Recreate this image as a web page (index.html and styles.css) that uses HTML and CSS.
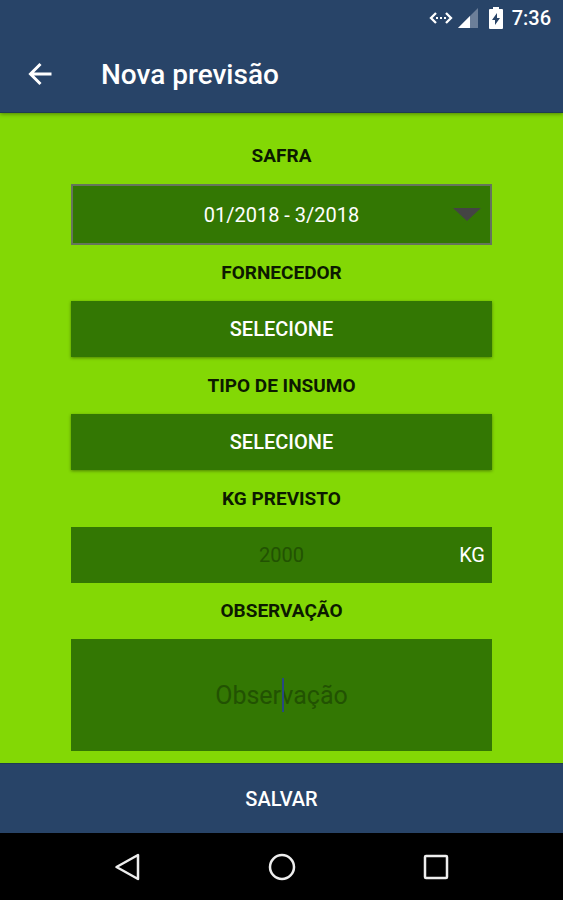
FILE: index.html
```html
<!DOCTYPE html>
<html lang="pt-BR">

<head>
    <meta charset="UTF-8" />
    <meta name="viewport" content="width=device-width, initial-scale=1.0" />
    <title>Nova previsão</title>
    <link rel="stylesheet" href="styles.css">
</head>

<body>
    <div class="app">
        <header class="top">
            <div class="status-bar">
                <svg class="icon-net" width="24" height="16" viewBox="0 0 24 16" aria-hidden="true">
                    <path d="M7 3 L2 8 L7 13 M17 3 L22 8 L17 13" fill="none" stroke="#fff" stroke-width="2.300" />
                    <path d="M7 7h2v2H7z M11 7h2v2h-2z M15 7h2v2h-2z" fill="#fff" />
                </svg>
                <svg class="icon-signal" width="20" height="20" viewBox="0 0 20 20" aria-hidden="true">
                    <path d="M20 0 V20 H0 Z" fill="#6c7f99" />
                    <path d="M12 8 V20 H0 Z" fill="#fff" />
                </svg>
                <svg class="icon-battery" width="14" height="22" viewBox="0 0 14 22" aria-hidden="true">
                    <path d="M4 0h6v2h3q1 0 1 1v18q0 1-1 1H1q-1 0-1-1V3q0-1 1-1h3z" fill="#fff" />
                    <path d="M8 6 L3 13 H6 V18 L11 11 H8 Z" fill="#284468" />
                </svg>
                <time class="clock">7:36</time>
            </div>
            <div class="toolbar">
                <button class="back" type="button" aria-label="Voltar">
                    <svg width="24" height="24" viewBox="0 0 24 24">
                        <path d="M23.500 12 H3 M12.500 2 L2.500 12 L12.500 22" fill="none" stroke="#fff" stroke-width="3" />
                    </svg>
                </button>
                <h1>Nova previsão</h1>
            </div>
        </header>

        <form class="form" id="form">
            <label for="safra">SAFRA</label>
            <div class="select">
                <select id="safra" name="safra">
                    <option>01/2018 - 3/2018</option>
                </select>
                <svg class="arrow" width="28" height="13" viewBox="0 0 28 13" aria-hidden="true">
                    <path d="M0 0 H28 L14 13 Z" fill="#444" />
                </svg>
            </div>

            <label for="fornecedor">FORNECEDOR</label>
            <button class="field" id="fornecedor" type="button">SELECIONE</button>

            <label for="insumo">TIPO DE INSUMO</label>
            <button class="field" id="insumo" type="button">SELECIONE</button>

            <label for="kg">KG PREVISTO</label>
            <div class="kg">
                <input type="text" id="kg" name="kg" inputmode="numeric" placeholder="2000" />
                <span class="unit">KG</span>
            </div>

            <label for="obs">OBSERVAÇÃO</label>
            <div class="obs">
                <textarea id="obs" name="obs" rows="1" placeholder="Observação"></textarea>
                <span class="caret"></span>
            </div>
        </form>

        <button class="save" type="submit" form="form">SALVAR</button>

        <nav class="nav-bar">
            <button type="button" aria-label="Voltar">
                <svg width="28" height="28" viewBox="0 0 28 28">
                    <path d="M24 2 V26 L2.500 14 Z" />
                </svg>
            </button>
            <button type="button" aria-label="Início">
                <svg width="28" height="28" viewBox="0 0 28 28">
                    <circle cx="14" cy="14" r="12" />
                </svg>
            </button>
            <button type="button" aria-label="Recentes">
                <svg width="28" height="28" viewBox="0 0 28 28">
                    <rect x="3" y="3" width="22" height="22" rx="1" />
                </svg>
            </button>
        </nav>
    </div>
</body>

</html>
```
FILE: styles.css
```css
* {
    box-sizing: border-box;
}

body {
    margin: 0;
    font-family: Roboto, "Liberation Sans", sans-serif;
    font-size: 20px;
}

button,
input,
select,
textarea {
    margin: 0;
    border: 0;
    border-radius: 0;
    font-family: inherit;
    font-size: inherit;
}

button {
    padding: 0;
    font-weight: 500;
    color: white;
    cursor: pointer;
}

.app {
    min-height: 100vh;
    display: flex;
    flex-flow: column;
    background-color: #83d805;
}

.top {
    background-color: #284468;
    color: white;
    border-bottom: 1px solid #1f3d50;
    box-shadow: 0 1px 4px rgba(0, 0, 0, 0.4);
}

.status-bar {
    display: flex;
    align-items: center;
    justify-content: flex-end;
    height: 36px;
    padding-right: 12px;
}

.icon-signal {
    margin-left: 5px;
}

.icon-battery {
    margin: 0 9px 0 11px;
}

.clock {
    font-weight: 500;
}

.toolbar {
    display: flex;
    align-items: center;
    height: 76px;
    padding-left: 28px;
}

.back {
    display: flex;
    background: none;
}

.toolbar h1 {
    margin: 0 0 0 49px;
    font-size: 28px;
    font-weight: 500;
}

.form {
    flex: 1;
    display: flex;
    flex-flow: column;
    padding: 15px 71px 12px;
}

.form label {
    line-height: 56px;
    text-align: center;
    font-size: 19px;
    font-weight: 700;
    color: #0c1a00;
}

.select,
.kg,
.obs {
    position: relative;
    display: flex;
}

.select select {
    width: 100%;
    height: 61px;
    padding: 0 40px;
    border: 2px solid #65755c;
    appearance: none;
    background-color: #337703;
    color: white;
    text-align: center;
    text-align-last: center;
}

.arrow {
    position: absolute;
    right: 11px;
    top: 24px;
    pointer-events: none;
}

.field {
    height: 56px;
    background-color: #337703;
    box-shadow: 0 1px 3px rgba(0, 0, 0, 0.4);
}

.field + label {
    margin-top: 1px;
}

.kg input {
    width: 100%;
    height: 56px;
    background-color: #337703;
    color: white;
    text-align: center;
}

.unit {
    position: absolute;
    right: 7px;
    line-height: 56px;
    color: white;
}

.obs textarea {
    width: 100%;
    height: 112px;
    padding: 40px 8px;
    resize: none;
    background-color: #337703;
    color: white;
    font-size: 25px;
    line-height: 34px;
    text-align: center;
}

::placeholder {
    color: #225202;
    opacity: 1;
}

.caret {
    position: absolute;
    left: 50%;
    top: 39px;
    width: 2px;
    height: 34px;
    background-color: #284880;
}

.save {
    height: 70px;
    border-top: 1px solid #1f3d50;
    background-color: #284468;
}

.nav-bar {
    display: flex;
    justify-content: center;
    gap: 126px;
    height: 67px;
    background-color: black;
}

.nav-bar button {
    display: flex;
    align-items: center;
    background: none;
}

.nav-bar svg {
    fill: none;
    stroke: #eee;
    stroke-width: 2.5;
    stroke-linejoin: round;
}
```
